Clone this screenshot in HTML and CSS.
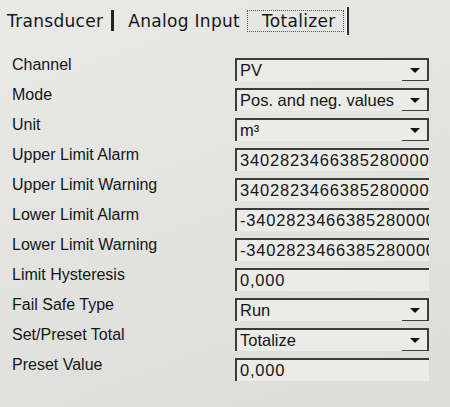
FILE: index.html
```html
<!DOCTYPE html>
<html lang="en">
<head>
  <meta charset="UTF-8">
  <title>Totalizer</title>
  <link rel="stylesheet" href="styles.css">
</head>
<body>

  <div class="tabs">
    <span class="tab">Transducer</span>
    <span class="tab-sep"></span>
    <span class="tab">Analog Input</span>
    <span class="tab active">Totalizer</span>
    <span class="tab-end"></span>
  </div>

  <div class="form">
    <div class="row">
      <span class="label">Channel</span>
      <div class="field combo"><span class="value">PV</span><span class="drop"></span></div>
    </div>
    <div class="row">
      <span class="label">Mode</span>
      <div class="field combo"><span class="value">Pos. and neg. values</span><span class="drop"></span></div>
    </div>
    <div class="row">
      <span class="label">Unit</span>
      <div class="field combo"><span class="value">m³</span><span class="drop"></span></div>
    </div>
    <div class="row">
      <span class="label">Upper Limit Alarm</span>
      <div class="field"><span class="value num">340282346638528000001</span></div>
    </div>
    <div class="row">
      <span class="label">Upper Limit Warning</span>
      <div class="field"><span class="value num">340282346638528000001</span></div>
    </div>
    <div class="row">
      <span class="label">Lower Limit Alarm</span>
      <div class="field"><span class="value num">-340282346638528000000</span></div>
    </div>
    <div class="row">
      <span class="label">Lower Limit Warning</span>
      <div class="field"><span class="value num">-340282346638528000000</span></div>
    </div>
    <div class="row">
      <span class="label">Limit Hysteresis</span>
      <div class="field"><span class="value num">0,000</span></div>
    </div>
    <div class="row">
      <span class="label">Fail Safe Type</span>
      <div class="field combo"><span class="value">Run</span><span class="drop"></span></div>
    </div>
    <div class="row">
      <span class="label">Set/Preset Total</span>
      <div class="field combo"><span class="value">Totalize</span><span class="drop"></span></div>
    </div>
    <div class="row">
      <span class="label">Preset Value</span>
      <div class="field"><span class="value num">0,000</span></div>
    </div>
  </div>

</body>
</html>
```

FILE: styles.css
```css
:root {
  --field-bg: #ebebe8;
  --edge-dark: #3c3c3c;
  --text: #161616;
}

body {
  margin: 0;
  background: linear-gradient(160deg, #e9e9e7, #dcdcd9);
  color: var(--text);
  font-family: "Liberation Sans", Arial, sans-serif;
  width: 450px;
  height: 407px;
  overflow: hidden;
}

/* Onglets */
.tabs {
  display: flex;
  align-items: center;
  height: 38px;
  box-sizing: border-box;
  padding: 3px 0 0 7px;
  font-family: "DejaVu Sans", Verdana, sans-serif;
  font-size: 17px;
  letter-spacing: 0.3px;
}

.tab {
  line-height: 20px;
  white-space: nowrap;
}

.tab-sep {
  width: 3px;
  height: 21px;
  background: #222;
  margin: 0 14px 0 8px;
}

.tab.active {
  margin-left: 7px;
  padding: 0 7px 0 14px;
  border: 1px dotted #555;
}

.tab-end {
  width: 2px;
  height: 28px;
  margin-left: 2px;
  background: #2a2a2a;
  border-left: 1px solid #fafafa;
}

/* Formulaire */
.form {
  padding: 17px 0 0 12px;
}

.row {
  display: grid;
  grid-template-columns: 223px 194px;
  height: 30px;
}

.label {
  font-size: 16px;
  line-height: 18px;
  padding-top: 1px;
  white-space: nowrap;
}

.field {
  margin-top: 3px;
  height: 23px;
  box-sizing: border-box;
  background: var(--field-bg);
  border-top: 2px solid var(--edge-dark);
  border-left: 2px solid var(--edge-dark);
  display: flex;
  align-items: center;
  overflow: hidden;
}

.value {
  flex: 1;
  min-width: 0;
  padding-left: 3px;
  font-size: 16.5px;
  white-space: nowrap;
  overflow: hidden;
  text-overflow: clip;
}

.value.num {
  letter-spacing: 0.8px;
}

.combo {
  border-right: 2px solid var(--edge-dark);
}

.drop {
  position: relative;
  flex: 0 0 25px;
  height: 100%;
  border-bottom: 1px solid var(--edge-dark);
  box-sizing: border-box;
}

.drop::after {
  content: "";
  position: absolute;
  left: 8px;
  top: 8px;
  border-left: 5px solid transparent;
  border-right: 5px solid transparent;
  border-top: 5px solid #111;
}
```
